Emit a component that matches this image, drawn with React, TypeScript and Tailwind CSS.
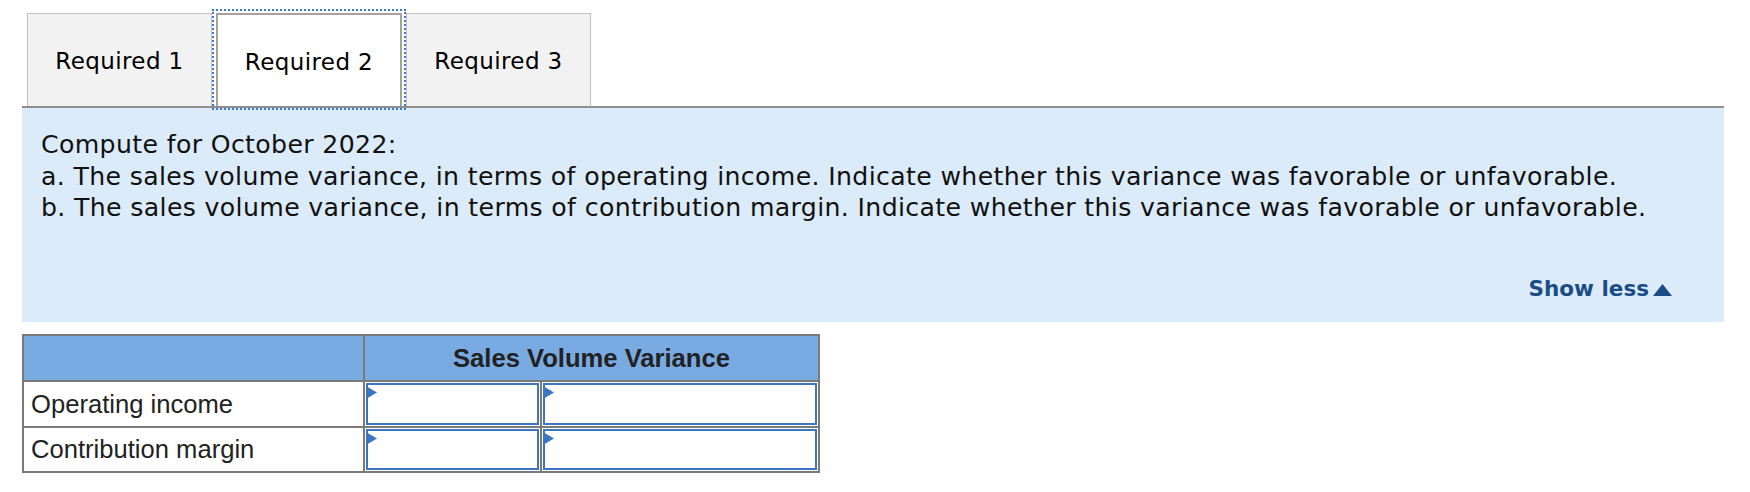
import { useState } from 'react';

const tabs = ['Required 1', 'Required 2', 'Required 3'];

const rows = ['Operating income', 'Contribution margin'];

function InputCell({ wide }: { wide?: boolean }) {
  return (
    <div
      className={
        wide
          ? 'flex-1 h-full p-[1px]'
          : 'w-[177px] h-full p-[1px] border-r-2 border-[#7a7a7a]'
      }
    >
      <div className="relative h-full w-full border-2 border-[#3b76bf] bg-white">
        <svg
          className="absolute -left-[2px] top-[1px]"
          width="11"
          height="13"
          viewBox="0 0 11 13"
        >
          <polygon points="0,0 11,6.5 0,13" fill="#3b76bf" />
        </svg>
      </div>
    </div>
  );
}

export default function App() {
  const [active, setActive] = useState(1);

  return (
    <div className="min-h-[492px] bg-white pt-[13px] pl-[22px]">
      <div className="w-[1702px]">
        {/* tab strip */}
        <div className="flex h-[93px] gap-[4px] pl-[5px]">
          {tabs.map((tab, i) => (
            <button
              key={tab}
              onClick={() => setActive(i)}
              className={
                i === active
                  ? "w-[186px] h-full pt-[3px] border-2 border-b-0 border-[#a3a3a3] bg-white outline-2 outline-dotted outline-offset-2 outline-[#3b7bc8] font-['DejaVu_Sans',sans-serif] text-[23px] tracking-[0.4px] text-black"
                  : "w-[185px] h-full pt-[3px] border border-b-0 border-[#c2c2c2] bg-[#f2f2f2] font-['DejaVu_Sans',sans-serif] text-[23px] tracking-[0.4px] text-black"
              }
            >
              {tab}
            </button>
          ))}
        </div>

        {/* question panel */}
        <section className="flex h-[216px] flex-col border-t-2 border-[#8f8f8f] bg-[#dbebf9] pt-[21px] pr-[52px] pb-[21px] pl-[19px] font-['DejaVu_Sans',sans-serif] text-[25.2px] leading-[31.5px] tracking-[0.35px] text-[#111]">
          <p>Compute for October 2022:</p>
          <p>
            a. The sales volume variance, in terms of operating income. Indicate whether this variance was
            favorable or unfavorable.
          </p>
          <p>
            b. The sales volume variance, in terms of contribution margin. Indicate whether this variance was
            favorable or unfavorable.
          </p>
          <button className="mt-auto flex items-end self-end gap-[4px] text-[21.5px] leading-[24px] tracking-normal font-bold text-[#1b4c86]">
            Show less
            <svg width="19" height="12" viewBox="0 0 19 12" className="mb-[5px]">
              <polygon points="9.5,0 19,12 0,12" fill="#1b4c86" />
            </svg>
          </button>
        </section>

        {/* answer table */}
        <div className="mt-[12px] w-[798px] border-2 border-[#7a7a7a] font-['Liberation_Sans',Arial,sans-serif] text-[25.6px] text-[#222]">
          <div className="flex h-[46px] border-b-2 border-[#7a7a7a] bg-[#79abe2]">
            <div className="w-[341px] border-r-2 border-[#7a7a7a]" />
            <div className="flex flex-1 items-center justify-center font-bold">Sales Volume Variance</div>
          </div>
          {rows.map((label, i) => (
            <div
              key={label}
              className={
                i === rows.length - 1
                  ? 'flex h-[43px]'
                  : 'flex h-[46px] border-b-2 border-[#7a7a7a]'
              }
            >
              <div className="flex w-[341px] items-center border-r-2 border-[#7a7a7a] pl-[7px]">{label}</div>
              <InputCell />
              <InputCell wide />
            </div>
          ))}
        </div>
      </div>
    </div>
  );
}
